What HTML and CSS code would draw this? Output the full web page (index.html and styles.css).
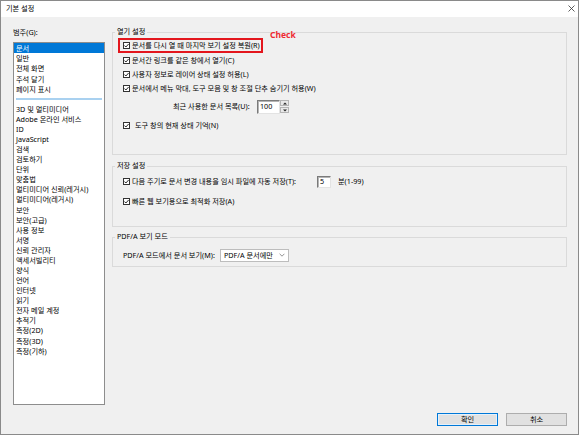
FILE: index.html
```html
<!DOCTYPE html>
<html lang="ko">
<head>
<meta charset="utf-8">
<title>기본 설정</title>
<link rel="stylesheet" href="styles.css">
</head>
<body>
<div class="window">
  <div class="titlebar">
    <span class="title">기본 설정</span>
    <svg class="close" width="7" height="7" viewBox="0 0 7 7"><path d="M0.5 0.5 6.5 6.5 M6.5 0.5 0.5 6.5" stroke="#333" stroke-width="0.8" fill="none"/></svg>
  </div>
  <div class="main">
    <div class="left">
      <div class="cat-label">범주(G):</div>
      <ul class="list">
        <li class="sel">문서</li>
        <li>일반</li>
        <li>전체 화면</li>
        <li>주석 달기</li>
        <li>페이지 표시</li>
        <li class="sep"><span class="sep-line"></span></li>
        <li>3D 및 멀티미디어</li>
        <li>Adobe 온라인 서비스</li>
        <li>ID</li>
        <li>JavaScript</li>
        <li>검색</li>
        <li>검토하기</li>
        <li>단위</li>
        <li>맞춤법</li>
        <li>멀티미디어 신뢰(레거시)</li>
        <li>멀티미디어(레거시)</li>
        <li>보안</li>
        <li>보안(고급)</li>
        <li>사용 정보</li>
        <li>서명</li>
        <li>신뢰 관리자</li>
        <li>액세서빌리티</li>
        <li>양식</li>
        <li>언어</li>
        <li>인터넷</li>
        <li>읽기</li>
        <li>전자 메일 계정</li>
        <li>추적기</li>
        <li>측정(2D)</li>
        <li>측정(3D)</li>
        <li>측정(기하)</li>
      </ul>
    </div>
    <div class="right">
      <fieldset class="group g1">
        <legend>열기 설정</legend>
        <div class="row r1">
          <span class="hl">
            <svg class="cb" width="7" height="7" viewBox="0 0 7 7"><rect x="0.5" y="0.5" width="6" height="6" fill="#fff" stroke="#333"/><path d="M1.4 3.5 2.9 5 5.6 2" fill="none" stroke="#111" stroke-width="0.9"/></svg>
            <span class="txt">문서를 다시 열 때 마지막 보기 설정 복원(R)</span>
          </span>
          <span class="note">Check</span>
        </div>
        <div class="row r2">
          <svg class="cb" width="7" height="7" viewBox="0 0 7 7"><rect x="0.5" y="0.5" width="6" height="6" fill="#fff" stroke="#333"/><path d="M1.4 3.5 2.9 5 5.6 2" fill="none" stroke="#111" stroke-width="0.9"/></svg>
          <span class="txt">문서간 링크를 같은 창에서 열기(C)</span>
        </div>
        <div class="row r2">
          <svg class="cb" width="7" height="7" viewBox="0 0 7 7"><rect x="0.5" y="0.5" width="6" height="6" fill="#fff" stroke="#333"/><path d="M1.4 3.5 2.9 5 5.6 2" fill="none" stroke="#111" stroke-width="0.9"/></svg>
          <span class="txt">사용자 정보로 레이어 상태 설정 허용(L)</span>
        </div>
        <div class="row r2">
          <svg class="cb" width="7" height="7" viewBox="0 0 7 7"><rect x="0.5" y="0.5" width="6" height="6" fill="#fff" stroke="#333"/><path d="M1.4 3.5 2.9 5 5.6 2" fill="none" stroke="#111" stroke-width="0.9"/></svg>
          <span class="txt">문서에서 메뉴 막대, 도구 모음 및 창 조절 단추 숨기기 허용(W)</span>
        </div>
        <div class="row recent">
          <span class="recent-label">최근 사용한 문서 목록(U):</span>
          <span class="field spin-field">100</span>
          <span class="spin">
            <span class="spin-btn"><svg width="4" height="3" viewBox="0 0 4 3"><path d="M0 2.5 2 0.5 4 2.5Z" fill="#222"/></svg></span>
            <span class="spin-btn"><svg width="4" height="3" viewBox="0 0 4 3"><path d="M0 0.5 2 2.5 4 0.5Z" fill="#222"/></svg></span>
          </span>
        </div>
        <div class="row r6">
          <svg class="cb" width="7" height="7" viewBox="0 0 7 7"><rect x="0.5" y="0.5" width="6" height="6" fill="#fff" stroke="#333"/><path d="M1.4 3.5 2.9 5 5.6 2" fill="none" stroke="#111" stroke-width="0.9"/></svg>
          <span class="txt wide">도구 창의 현재 상태 기억(N)</span>
        </div>
      </fieldset>

      <fieldset class="group g2">
        <legend>저장 설정</legend>
        <div class="row s1">
          <svg class="cb" width="7" height="7" viewBox="0 0 7 7"><rect x="0.5" y="0.5" width="6" height="6" fill="#fff" stroke="#333"/><path d="M1.4 3.5 2.9 5 5.6 2" fill="none" stroke="#111" stroke-width="0.9"/></svg>
          <span class="txt save-label">다음 주기로 문서 변경 내용을 임시 파일에 자동 저장(T):</span>
          <span class="field min-field">5</span>
          <span class="unit">분(1-99)</span>
        </div>
        <div class="row s2">
          <svg class="cb" width="7" height="7" viewBox="0 0 7 7"><rect x="0.5" y="0.5" width="6" height="6" fill="#fff" stroke="#333"/><path d="M1.4 3.5 2.9 5 5.6 2" fill="none" stroke="#111" stroke-width="0.9"/></svg>
          <span class="txt">빠른 웹 보기용으로 최적화 저장(A)</span>
        </div>
      </fieldset>

      <fieldset class="group g3">
        <legend>PDF/A 보기 모드</legend>
        <div class="row p1">
          <span class="pdfa-label">PDF/A 모드에서 문서 보기(M):</span>
          <span class="select">
            <span class="select-text">PDF/A 문서에만</span>
            <svg class="chev" width="6" height="4" viewBox="0 0 6 4"><path d="M0.6 0.8 3 3.2 5.4 0.8" fill="none" stroke="#777" stroke-width="0.8"/></svg>
          </span>
        </div>
      </fieldset>
    </div>
  </div>
  <div class="footer">
    <button class="btn primary">확인</button>
    <button class="btn">취소</button>
  </div>
</div>
</body>
</html>
```

FILE: styles.css
```css
* { box-sizing: border-box; }

body {
  margin: 0;
  background: #ffffff;
  font-family: "Noto Sans", "Noto Sans CJK KR", sans-serif;
  font-size: 7.2px;
  color: #000;
}

.window {
  width: 579px;
  height: 435px;
  border: 1px solid #8a8a8a;
  background: #f0f0f0;
  display: flex;
  flex-direction: column;
}

.titlebar {
  height: 16px;
  background: #ffffff;
  display: flex;
  align-items: center;
  justify-content: space-between;
  padding: 0 3px 2px 5px;
  flex: none;
}

.title {
  line-height: 10px;
}

.close {
  display: block;
}

.main {
  display: flex;
  height: 388px;
  padding-left: 12px;
  flex: none;
}

.left {
  width: 92px;
  display: flex;
  flex-direction: column;
}

.cat-label {
  margin-top: 11px;
  line-height: 8px;
  height: 8px;
}

.list {
  margin: 6px 0 0;
  padding: 0.3px 0 0;
  list-style: none;
  height: 363px;
  border: 1px solid #8d8d8d;
  background: #ffffff;
  overflow: hidden;
}

.list li {
  height: 10.08px;
  line-height: 10.08px;
  padding-left: 2px;
  white-space: nowrap;
}

.list li.sel {
  background: #0078d7;
  color: #ffffff;
}

.list li.sep {
  display: flex;
  align-items: center;
  padding: 0 2px;
}

.sep-line {
  display: block;
  width: 100%;
  height: 2px;
  background: #a9d1f0;
}

.right {
  margin-left: 7px;
  width: 455px;
  display: flex;
  flex-direction: column;
  padding-top: 10px;
}

.group {
  margin: 0;
  padding: 0;
  border: 1px solid #dadada;
  min-width: 0;
}

.group legend {
  margin-left: 2px;
  padding: 0 2px 3px;
  line-height: 8px;
  height: 11px;
}

.g1 { padding-bottom: 21px; }
.g2 { margin-top: 6px; padding-bottom: 17.7px; }
.g3 { margin-top: 5.5px; padding-bottom: 4.3px; }

.row {
  display: flex;
  align-items: center;
  padding-left: 10px;
  white-space: nowrap;
  line-height: 9px;
}

.cb {
  display: block;
  flex: none;
}

.txt {
  margin-left: 2px;
}

.txt.wide {
  margin-left: 5px;
}

.r1 {
  height: 15px;
  position: relative;
}

.hl {
  display: flex;
  align-items: center;
  height: 15px;
  border: 2px solid #e3161d;
  margin-left: -5px;
  padding: 0 1px 0 3px;
}

.note {
  position: absolute;
  left: 157px;
  top: -8px;
  font-weight: bold;
  font-size: 8.5px;
  line-height: 10px;
  color: #ee2a32;
}

.r2 {
  height: 14.1px;
}

.recent {
  height: 16px;
  margin-top: 3.7px;
  padding-left: 60px;
}

.recent-label {
  width: 84px;
  flex: none;
}

.field {
  display: flex;
  align-items: center;
  background: #ffffff;
  border: 1px solid;
  border-color: #7a7a7a #e3e3e3 #e3e3e3 #7a7a7a;
  box-shadow: inset 1px 1px 0 #b4b4b4;
  padding-left: 2px;
  flex: none;
}

.spin-field {
  width: 23px;
  height: 14px;
}

.spin {
  display: flex;
  flex-direction: column;
  gap: 1px;
  width: 9px;
}

.spin-btn {
  height: 6px;
  display: flex;
  align-items: center;
  justify-content: center;
  background: #e9e9e9;
  border: 1px solid #b5b5b5;
}

.spin-btn svg { display: block; }

.r6 {
  height: 14px;
  margin-top: 4px;
}

.s1 {
  height: 14px;
  margin-top: 2.7px;
}

.save-label {
  width: 185px;
  flex: none;
}

.min-field {
  width: 14px;
  height: 12px;
}

.unit {
  margin-left: 7px;
}

.s2 {
  height: 14px;
  margin-top: 5.6px;
}

.p1 {
  height: 14px;
  margin-top: 4.7px;
}

.pdfa-label {
  width: 97px;
  flex: none;
}

.select {
  width: 69px;
  height: 13px;
  display: flex;
  align-items: center;
  justify-content: space-between;
  background: #ffffff;
  border: 1px solid #bdbdbd;
  padding: 0 3px 0 3px;
  flex: none;
}

.chev { display: block; }

.footer {
  display: flex;
  justify-content: flex-end;
  gap: 8px;
  padding: 8px 11px 0 0;
}

.btn {
  width: 61px;
  height: 13px;
  margin: 0;
  padding: 0;
  font-family: inherit;
  font-size: 7.2px;
  line-height: 11px;
  color: #000;
  background: #e1e1e1;
  border: 1px solid #adadad;
}

.btn.primary {
  border-color: #0078d7;
  box-shadow: inset 0 0 0 1px #e5f1fb;
}
```
